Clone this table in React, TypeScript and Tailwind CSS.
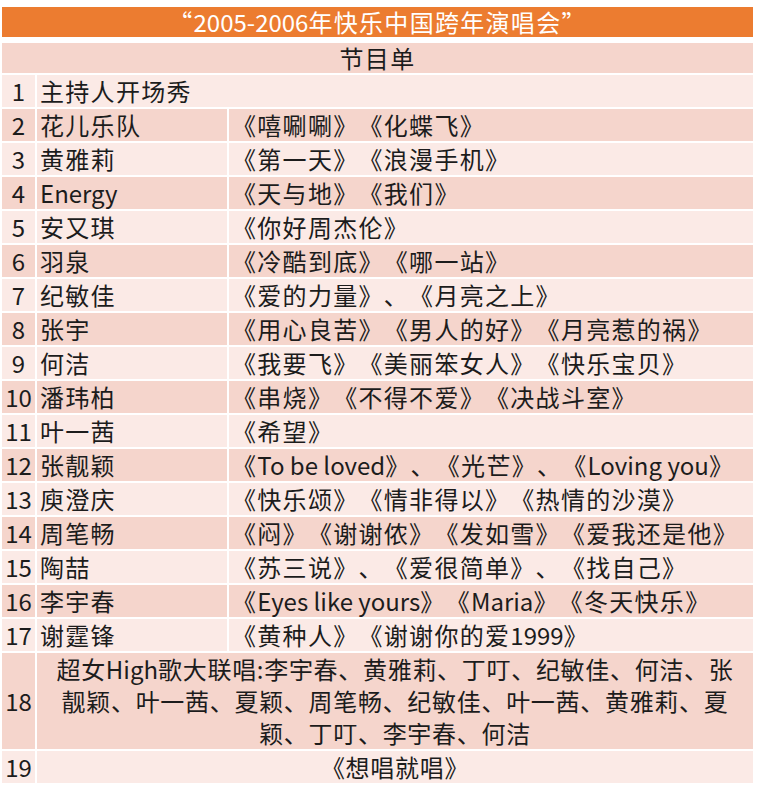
import React from 'react';

type Row = {
  n: string;
  name?: string;
  songs?: string;
  span?: string[];
  center?: boolean;
};

const rows: Row[] = [
  { n: '1', span: ['主持人开场秀'] },
  { n: '2', name: '花儿乐队', songs: '《嘻唰唰》《化蝶飞》' },
  { n: '3', name: '黄雅莉', songs: '《第一天》《浪漫手机》' },
  { n: '4', name: 'Energy', songs: '《天与地》《我们》' },
  { n: '5', name: '安又琪', songs: '《你好周杰伦》' },
  { n: '6', name: '羽泉', songs: '《冷酷到底》《哪一站》' },
  { n: '7', name: '纪敏佳', songs: '《爱的力量》、《月亮之上》' },
  { n: '8', name: '张宇', songs: '《用心良苦》《男人的好》《月亮惹的祸》' },
  { n: '9', name: '何洁', songs: '《我要飞》《美丽笨女人》《快乐宝贝》' },
  { n: '10', name: '潘玮柏', songs: '《串烧》《不得不爱》《决战斗室》' },
  { n: '11', name: '叶一茜', songs: '《希望》' },
  { n: '12', name: '张靓颖', songs: '《To be loved》、《光芒》、《Loving you》' },
  { n: '13', name: '庾澄庆', songs: '《快乐颂》《情非得以》《热情的沙漠》' },
  { n: '14', name: '周笔畅', songs: '《闷》《谢谢侬》《发如雪》《爱我还是他》' },
  { n: '15', name: '陶喆', songs: '《苏三说》、《爱很简单》、《找自己》' },
  { n: '16', name: '李宇春', songs: '《Eyes like yours》《Maria》《冬天快乐》' },
  { n: '17', name: '谢霆锋', songs: '《黄种人》《谢谢你的爱1999》' },
  {
    n: '18',
    center: true,
    span: [
      '超女High歌大联唱:李宇春、黄雅莉、丁叮、纪敏佳、何洁、张',
      '靓颖、叶一茜、夏颖、周笔畅、纪敏佳、叶一茜、黄雅莉、夏',
      '颖、丁叮、李宇春、何洁',
    ],
  },
  { n: '19', center: true, span: ['《想唱就唱》'] },
];

// latin runs keep normal spacing, CJK gets a bit of extra tracking
const T = ({ text }: { text: string }) => (
  <>
    {text.split(/([A-Za-z0-9 \-]+)/).map((part, i) =>
      /^[A-Za-z0-9 \-]+$/.test(part) ? (
        <span key={i} className="tracking-normal">
          {part}
        </span>
      ) : (
        <span key={i}>{part}</span>
      )
    )}
  </>
);

export default function App() {
  return (
    <div
      className="w-[758px] h-[800px] bg-white pl-[2px] pr-[5px] pt-[7px] text-[24px] leading-none tracking-[1.3px] text-[#1c1c1c] [text-spacing-trim:space-all]"
      style={{ fontFamily: '"Noto Sans CJK SC", "Noto Sans", sans-serif' }}
    >
      <div className="h-[30px] bg-[#ec7c30] text-white flex items-center justify-center">
        <T text="“2005-2006年快乐中国跨年演唱会”" />
      </div>
      <div className="mt-[6px] grid grid-cols-[33px_190px_1fr] gap-[2px]">
        <div className="col-span-3 h-[30px] bg-[#f5d5cc] flex items-center justify-center">节目单</div>
        {rows.map((r, i) => {
          const bg = i % 2 === 0 ? 'bg-[#fbeae6]' : 'bg-[#f5d5cc]';
          return (
            <React.Fragment key={r.n}>
              <div className={`${bg} flex items-center justify-center tracking-normal`}>{r.n}</div>
              {r.span ? (
                <div
                  className={`col-span-2 ${bg} flex flex-col justify-center ${
                    r.center ? 'items-center tracking-[0.7px]' : 'items-start pl-[3px]'
                  }`}
                >
                  {r.span.map((line) => (
                    <div key={line} className="h-[32px] flex items-center whitespace-nowrap">
                      <T text={line} />
                    </div>
                  ))}
                </div>
              ) : (
                <>
                  <div className={`${bg} h-[32px] flex items-center pl-[3px] whitespace-nowrap`}>
                    <T text={r.name ?? ''} />
                  </div>
                  <div className={`${bg} h-[32px] flex items-center pl-[3px] whitespace-nowrap`}>
                    <T text={r.songs ?? ''} />
                  </div>
                </>
              )}
            </React.Fragment>
          );
        })}
      </div>
    </div>
  );
}
